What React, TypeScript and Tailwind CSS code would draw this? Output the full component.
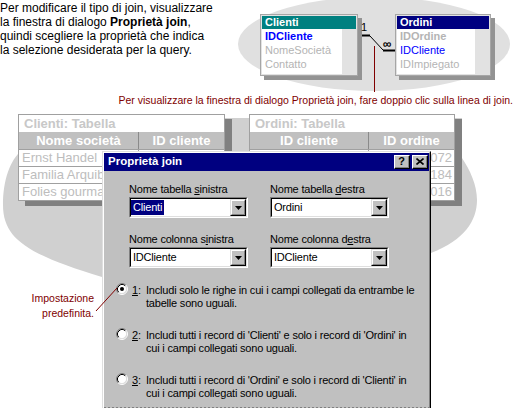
import React from 'react';

type Field = { name: string; tone: 'key' | 'link' | 'dim' | 'dimBold' };

const fieldTone: Record<Field['tone'], string> = {
  key: 'font-bold text-[#0000ff]',
  link: 'text-[#0000ff]',
  dim: 'text-[#b4b4b4]',
  dimBold: 'font-bold text-[#b4b4b4]',
};

const clientiFields: Field[] = [
  { name: 'IDCliente', tone: 'key' },
  { name: 'NomeSocietà', tone: 'dim' },
  { name: 'Contatto', tone: 'dim' },
];

const ordiniFields: Field[] = [
  { name: 'IDOrdine', tone: 'dimBold' },
  { name: 'IDCliente', tone: 'link' },
  { name: 'IDImpiegato', tone: 'dim' },
];

// field list window from the query design grid
function FieldList({ title, titleBg, width, fields, className }: {
  title: string;
  titleBg: string;
  width: string;
  fields: Field[];
  className: string;
}) {
  return (
    <div className={`absolute ${className}`}>
      <div className="absolute left-[4px] top-[4px] h-full w-full bg-[#939393]" />
      <div className={`relative ${width} border border-[#a6a6a6] bg-[#e2e2e2] p-[1px]`}>
        <div className={`h-[13px] ${titleBg} pl-[3px] text-[11px] font-bold leading-[13px] text-white`}>{title}</div>
        <div className="flex h-[45px]">
          <div className="flex-1 bg-white pl-[3px] text-[11px] leading-[14px]">
            {fields.map((f) => (
              <div key={f.name} className={fieldTone[f.tone]}>{f.name}</div>
            ))}
          </div>
          <div className="w-[14px]" />
        </div>
      </div>
    </div>
  );
}

// greyed datasheet behind the dialog
function DataSheet({ title, headers, firstCol, rows, className, width }: {
  title: string;
  headers: [string, string];
  firstCol: string;
  rows: [string, string][];
  className: string;
  width: string;
}) {
  return (
    <div className={`absolute ${className}`}>
      <div className="absolute left-[7px] top-[5px] h-full w-full bg-[#808080]" />
      <div className={`relative ${width} border border-[#a0a0a0] bg-white text-[13px]`}>
        <div className="h-[17px] pl-[5px] font-bold leading-[17px] text-[#c8c8c8]">{title}</div>
        <div className="flex h-[17px] bg-[#c0c0c0] font-bold leading-[17px] text-white">
          <div className={`${firstCol} border-r border-[#8a8a8a] text-center`}>{headers[0]}</div>
          <div className="flex-1 text-center">{headers[1]}</div>
        </div>
        {rows.map(([a, b]) => (
          <div key={a + b} className="flex h-[17px] border-t border-[#a0a0a0] leading-[16px] text-[#bdbdbd]">
            <div className={`${firstCol} overflow-hidden whitespace-nowrap border-r border-[#a0a0a0] pl-[3px]`}>{a}</div>
            <div className="flex-1 overflow-hidden whitespace-nowrap pr-[2px] text-right">{b}</div>
          </div>
        ))}
      </div>
    </div>
  );
}

function CapButton({ children }: { children: React.ReactNode }) {
  return (
    <div className="h-[14px] w-[16px] border border-b-black border-l-white border-r-black border-t-white bg-[#c0c0c0]">
      <div className="flex h-full items-center justify-center border-b border-r border-b-[#808080] border-r-[#808080]">
        {children}
      </div>
    </div>
  );
}

function Combo({ value, selected }: { value: string; selected?: boolean }) {
  return (
    <div className="h-[21px] w-[119px] border border-b-white border-l-[#808080] border-r-white border-t-[#808080]">
      <div className="flex h-full items-center border border-b-[#dfdfdf] border-l-black border-r-[#dfdfdf] border-t-black bg-white">
        {selected ? (
          <span className="bg-[#000080] px-[2px] leading-[15px] text-white">{value}</span>
        ) : (
          <span className="pl-[2px]">{value}</span>
        )}
        <div className="ml-auto h-[17px] w-[16px] border border-b-black border-l-[#dfdfdf] border-r-black border-t-[#dfdfdf]">
          <div className="flex h-full items-center justify-center border-b border-l border-r border-t border-b-[#808080] border-l-white border-r-[#808080] border-t-white bg-[#c0c0c0]">
            <svg width="7" height="4" viewBox="0 0 7 4">
              <path d="M0 0h7L3.5 4z" fill="#000" />
            </svg>
          </div>
        </div>
      </div>
    </div>
  );
}

function Radio({ checked }: { checked?: boolean }) {
  return (
    <svg width="12" height="12" viewBox="0 0 12 12" className="-mt-px shrink-0">
      <circle cx="6" cy="6" r="4.5" fill="#fff" />
      <path d="M2.11 9.89A5.5 5.5 0 0 1 9.89 2.11" stroke="#808080" fill="none" />
      <path d="M9.89 2.11A5.5 5.5 0 0 1 2.11 9.89" stroke="#fff" fill="none" />
      <path d="M2.82 9.18A4.5 4.5 0 0 1 9.18 2.82" stroke="#000" fill="none" />
      <path d="M9.18 2.82A4.5 4.5 0 0 1 2.82 9.18" stroke="#dfdfdf" fill="none" />
      {checked && <circle cx="6" cy="6" r="2" fill="#000" />}
    </svg>
  );
}

const options = [
  { key: '1', lines: ['Includi solo le righe in cui i campi collegati da entrambe le', 'tabelle sono uguali.'], checked: true },
  { key: '2', lines: ["Includi tutti i record di 'Clienti' e solo i record di 'Ordini' in", 'cui i campi collegati sono uguali.'] },
  { key: '3', lines: ["Includi tutti i record di 'Ordini' e solo i record di 'Clienti' in", 'cui i campi collegati sono uguali.'] },
];

export default function App() {
  return (
    <div className="relative h-[409px] w-[513px] overflow-hidden bg-white font-['Liberation_Sans',Arial,sans-serif] text-black">
      {/* background shapes and join line */}
      <svg className="absolute left-0 top-0" width="513" height="409">
        <ellipse cx="374" cy="44" rx="136" ry="47" fill="#e0e0e0" />
        <path
          d="M22 150C10 160 3 180 3 205C3 240 30 255 102 277L431 253C465 240 477 220 477 200C477 185 470 170 462 158L462 118L22 118Z"
          fill="#d0d0d0"
        />
        <path d="M357 35.5h13" stroke="#000" strokeWidth="2" />
        <path d="M370 36L383 50" stroke="#000" />
        <path d="M383 50.5h12" stroke="#000" strokeWidth="2" />
        <path d="M374.5 46V92" stroke="#800000" />
      </svg>

      <div className="relative pt-[1px] text-[12px] leading-[14px]">
        Per modificare il tipo di join, visualizzare
        <br />
        la finestra di dialogo <b>Proprietà join</b>,
        <br />
        quindi scegliere la proprietà che indica
        <br />
        la selezione desiderata per la query.
      </div>

      <FieldList className="left-[260px] top-[14px]" width="w-[98px]" title="Clienti" titleBg="bg-[#008080]" fields={clientiFields} />
      <FieldList className="left-[395px] top-[14px]" width="w-[96px]" title="Ordini" titleBg="bg-[#000080]" fields={ordiniFields} />
      <span className="absolute left-[361px] top-[22px] text-[11px] leading-[11px]">1</span>
      <span className="absolute left-[383px] top-[38px] text-[12px] font-bold leading-[12px]">∞</span>

      <div className="relative mt-[37px] text-right text-[10.5px] leading-[13px] text-[#800000]">
        Per visualizzare la finestra di dialogo Proprietà join, fare doppio clic sulla linea di join.
      </div>

      <DataSheet
        className="left-[18px] top-[114px]"
        width="w-[207px]"
        firstCol="w-[120px]"
        title="Clienti: Tabella"
        headers={['Nome società', 'ID cliente']}
        rows={[
          ['Ernst Handel', 'ERNSH'],
          ['Familia Arquibaldo', 'FAMIA'],
          ['Folies gourmandes', 'FOLIG'],
        ]}
      />
      <DataSheet
        className="left-[249px] top-[114px]"
        width="w-[206px]"
        firstCol="w-[119px]"
        title="Ordini: Tabella"
        headers={['ID cliente', 'ID ordine']}
        rows={[
          ['ERNSH', '10072'],
          ['FAMIA', '10184'],
          ['FOLIG', '10016'],
        ]}
      />

      {/* Proprietà join dialog */}
      <div className="absolute left-[102px] top-[151px] h-[257px] w-[329px] border-l border-r border-t border-l-[#dfdfdf] border-r-black border-t-[#dfdfdf]">
        <div className="flex h-full flex-col border-l border-r border-t border-l-white border-r-[#808080] border-t-white bg-[#c0c0c0]">
          <div className="flex h-[18px] items-center bg-[#000080] pl-[4px] pr-[1px]">
            <span className="text-[11.5px] font-bold text-white">Proprietà join</span>
            <div className="ml-auto flex gap-[2px]">
              <CapButton>
                <span className="text-[11px] font-bold leading-none">?</span>
              </CapButton>
              <CapButton>
                <svg width="8" height="7" viewBox="0 0 8 7">
                  <path d="M0.5 0.5L7.5 6.5M7.5 0.5L0.5 6.5" stroke="#000" strokeWidth="1.6" />
                </svg>
              </CapButton>
            </div>
          </div>

          <div className="grid grid-cols-[141px_141px] gap-y-[15px] pl-[25px] pt-[12px] text-[11px] leading-[13px] tracking-[-0.2px]">
            <div>
              <div className="mb-[1px]">Nome tabella <u>s</u>inistra</div>
              <Combo value="Clienti" selected />
            </div>
            <div>
              <div className="mb-[1px]">Nome tabella <u>d</u>estra</div>
              <Combo value="Ordini" />
            </div>
            <div>
              <div className="mb-[1px]">Nome colonna s<u>i</u>nistra</div>
              <Combo value="IDCliente" />
            </div>
            <div>
              <div className="mb-[1px]">Nome colonna d<u>e</u>stra</div>
              <Combo value="IDCliente" />
            </div>
          </div>

          <div className="mt-[16px] flex flex-col gap-[19px] pl-[12px] text-[11px] leading-[13px] tracking-[-0.2px]">
            {options.map((o) => (
              <div key={o.key} className="flex items-start">
                <Radio checked={o.checked} />
                <span className="ml-[4px] w-[14px]">
                  <u>{o.key}</u>:
                </span>
                <span>
                  {o.lines[0]}
                  <br />
                  {o.lines[1]}
                </span>
              </div>
            ))}
          </div>

          <div className="mt-auto h-px bg-[repeating-linear-gradient(90deg,#808080_0_2px,transparent_2px_4px)]" />
        </div>
      </div>

      {/* callout for the default option */}
      <div className="absolute left-0 top-[291px] w-[94px] text-right text-[10.5px] leading-[15px] text-[#800000]">
        Impostazione
        <br />
        predefinita.
      </div>
      <svg className="absolute left-0 top-0" width="513" height="409">
        <path d="M96 311L117 288" stroke="#800000" />
      </svg>
    </div>
  );
}
